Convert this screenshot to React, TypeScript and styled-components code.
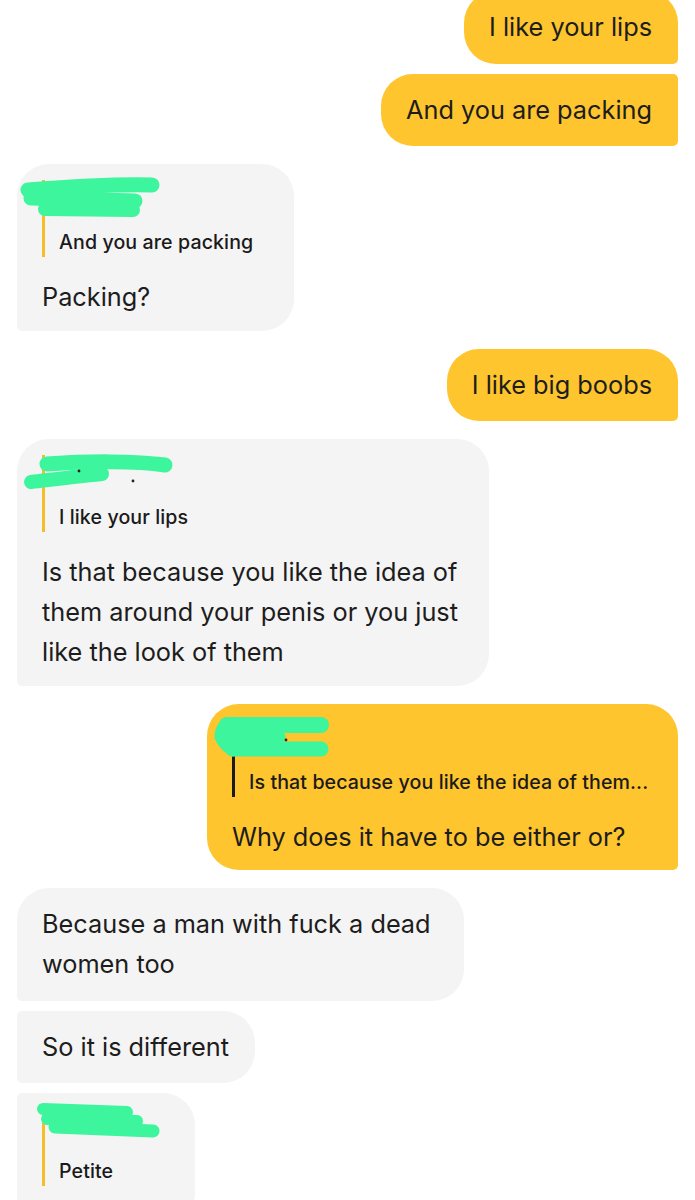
import React from "react";
import styled, { createGlobalStyle } from "styled-components";

const GlobalStyle = createGlobalStyle`
  html, body {
    margin: 0;
    padding: 0;
    background: #ffffff;
  }
  body {
    font-family: Inter, "Noto Sans", "Liberation Sans", sans-serif;
    color: #1d1d1d;
    overflow: hidden;
  }
`;

const YELLOW = "#fec52e";
const GREY = "#f4f4f4";
const MARK = "#3cf59c";

type Stroke = { d: string; w: number };

type Message = {
  mine: boolean;
  first: boolean;
  text: string;
  reply?: string;
  nameW?: number;
  minW?: number;
  scribble?: Stroke[];
  dots?: [number, number][];
  clipped?: boolean;
};

const messages: Message[] = [
  { mine: true, first: true, text: "I like your lips" },
  { mine: true, first: false, text: "And you are packing" },
  {
    mine: false,
    first: true,
    text: "Packing?",
    reply: "And you are packing",
    nameW: 209,
    scribble: [
      { d: "M11 26 C 50 23, 100 20, 135 21", w: 15 },
      { d: "M14 34 L 118 37", w: 15 },
      { d: "M28 45 L 116 46", w: 14 },
    ],
  },
  { mine: true, first: true, text: "I like big boobs" },
  {
    mine: false,
    first: true,
    text: "Is that because you like the idea of\nthem around your penis or you just\nlike the look of them",
    reply: "I like your lips",
    nameW: 120,
    minW: 472,
    scribble: [
      { d: "M30 25 C 70 22, 120 22, 148 26", w: 15 },
      { d: "M14 43 C 40 40, 65 37, 85 35", w: 14 },
    ],
    dots: [[62, 32], [116, 42]],
  },
  {
    mine: true,
    first: true,
    text: "Why does it have to be either or?",
    reply: "Is that because you like the idea of them...",
    nameW: 100,
    minW: 471,
    scribble: [
      { d: "M20 21 L 114 21", w: 16 },
      { d: "M20 21 Q 8 33 26 45", w: 15 },
      { d: "M14 33 L 72 33", w: 13 },
      { d: "M26 45 L 114 45", w: 15 },
    ],
    dots: [[79, 36]],
  },
  {
    mine: false,
    first: true,
    text: "Because a man with fuck a dead\nwomen too",
    minW: 447,
  },
  { mine: false, first: false, text: "So it is different" },
  {
    mine: false,
    first: false,
    text: "",
    reply: "Petite",
    nameW: 110,
    clipped: true,
    scribble: [
      { d: "M26 16 L 110 19", w: 12 },
      { d: "M30 26 L 120 28", w: 12 },
      { d: "M38 34 L 136 38", w: 13 },
    ],
  },
];

const Thread = styled.div`
  display: flex;
  flex-direction: column;
  padding: 0 17px;
  margin-top: -9px;
`;

const Row = styled.div<{ $mine: boolean; $gap: number }>`
  display: flex;
  justify-content: ${(p) => (p.$mine ? "flex-end" : "flex-start")};
  margin-top: ${(p) => p.$gap}px;
`;

const Bubble = styled.div<{ $mine: boolean; $first: boolean; $minW?: number; $clipped?: boolean }>`
  position: relative;
  box-sizing: border-box;
  min-width: ${(p) => (p.$minW ? `${p.$minW}px` : "0")};
  padding: 16px 26px ${(p) => (p.$clipped ? "40px" : "16.5px")} 25px;
  background: ${(p) => (p.$mine ? YELLOW : GREY)};
  border-radius: ${(p) =>
    p.$mine
      ? `32px ${p.$first ? "32px" : "5px"} 5px 32px`
      : `${p.$first ? "32px" : "5px"} 32px 32px 5px`};
`;

const Quote = styled.div<{ $mine: boolean }>`
  border-left: 3px solid ${(p) => (p.$mine ? "#1a1a1a" : "#f6bd2a")};
  padding: 0 0 2px 14px;
`;

const NameSlot = styled.div<{ $w: number }>`
  width: ${(p) => p.$w}px;
  height: 49px;
`;

const QuoteText = styled.div`
  font-size: 19.6px;
  line-height: 26px;
  font-weight: 500;
  letter-spacing: 0.1px;
  white-space: nowrap;
  color: #1a1a1a;
`;

const Body = styled.div<{ $afterQuote: boolean }>`
  margin: ${(p) => (p.$afterQuote ? "20px 0 -3px" : "0")};
  font-size: 25.3px;
  line-height: 40px;
  white-space: pre;
  color: #1d1d1d;
`;

const Redaction = styled.svg`
  position: absolute;
  left: 0;
  top: 0;
  width: 200px;
  height: 70px;
  pointer-events: none;
`;

function Scribble({ strokes, dots }: { strokes: Stroke[]; dots?: [number, number][] }) {
  return (
    <Redaction viewBox="0 0 200 70">
      {strokes.map((s, i) => (
        <path
          key={i}
          d={s.d}
          fill="none"
          stroke={MARK}
          strokeWidth={s.w}
          strokeLinecap="round"
          strokeLinejoin="round"
        />
      ))}
      {dots?.map(([x, y], i) => (
        <circle key={i} cx={x} cy={y} r={1.4} fill="#222" />
      ))}
    </Redaction>
  );
}

export default function App() {
  return (
    <>
      <GlobalStyle />
      <Thread>
        {messages.map((m, i) => {
          const prev = messages[i - 1];
          const gap = i === 0 ? 0 : prev.mine === m.mine ? 10 : 18;
          return (
            <Row key={i} $mine={m.mine} $gap={gap}>
              <Bubble $mine={m.mine} $first={m.first} $minW={m.minW} $clipped={m.clipped}>
                {m.reply && (
                  <Quote $mine={m.mine}>
                    <NameSlot $w={m.nameW ?? 100} />
                    <QuoteText>{m.reply}</QuoteText>
                  </Quote>
                )}
                {m.text && <Body $afterQuote={!!m.reply}>{m.text}</Body>}
                {m.scribble && <Scribble strokes={m.scribble} dots={m.dots} />}
              </Bubble>
            </Row>
          );
        })}
      </Thread>
    </>
  );
}
